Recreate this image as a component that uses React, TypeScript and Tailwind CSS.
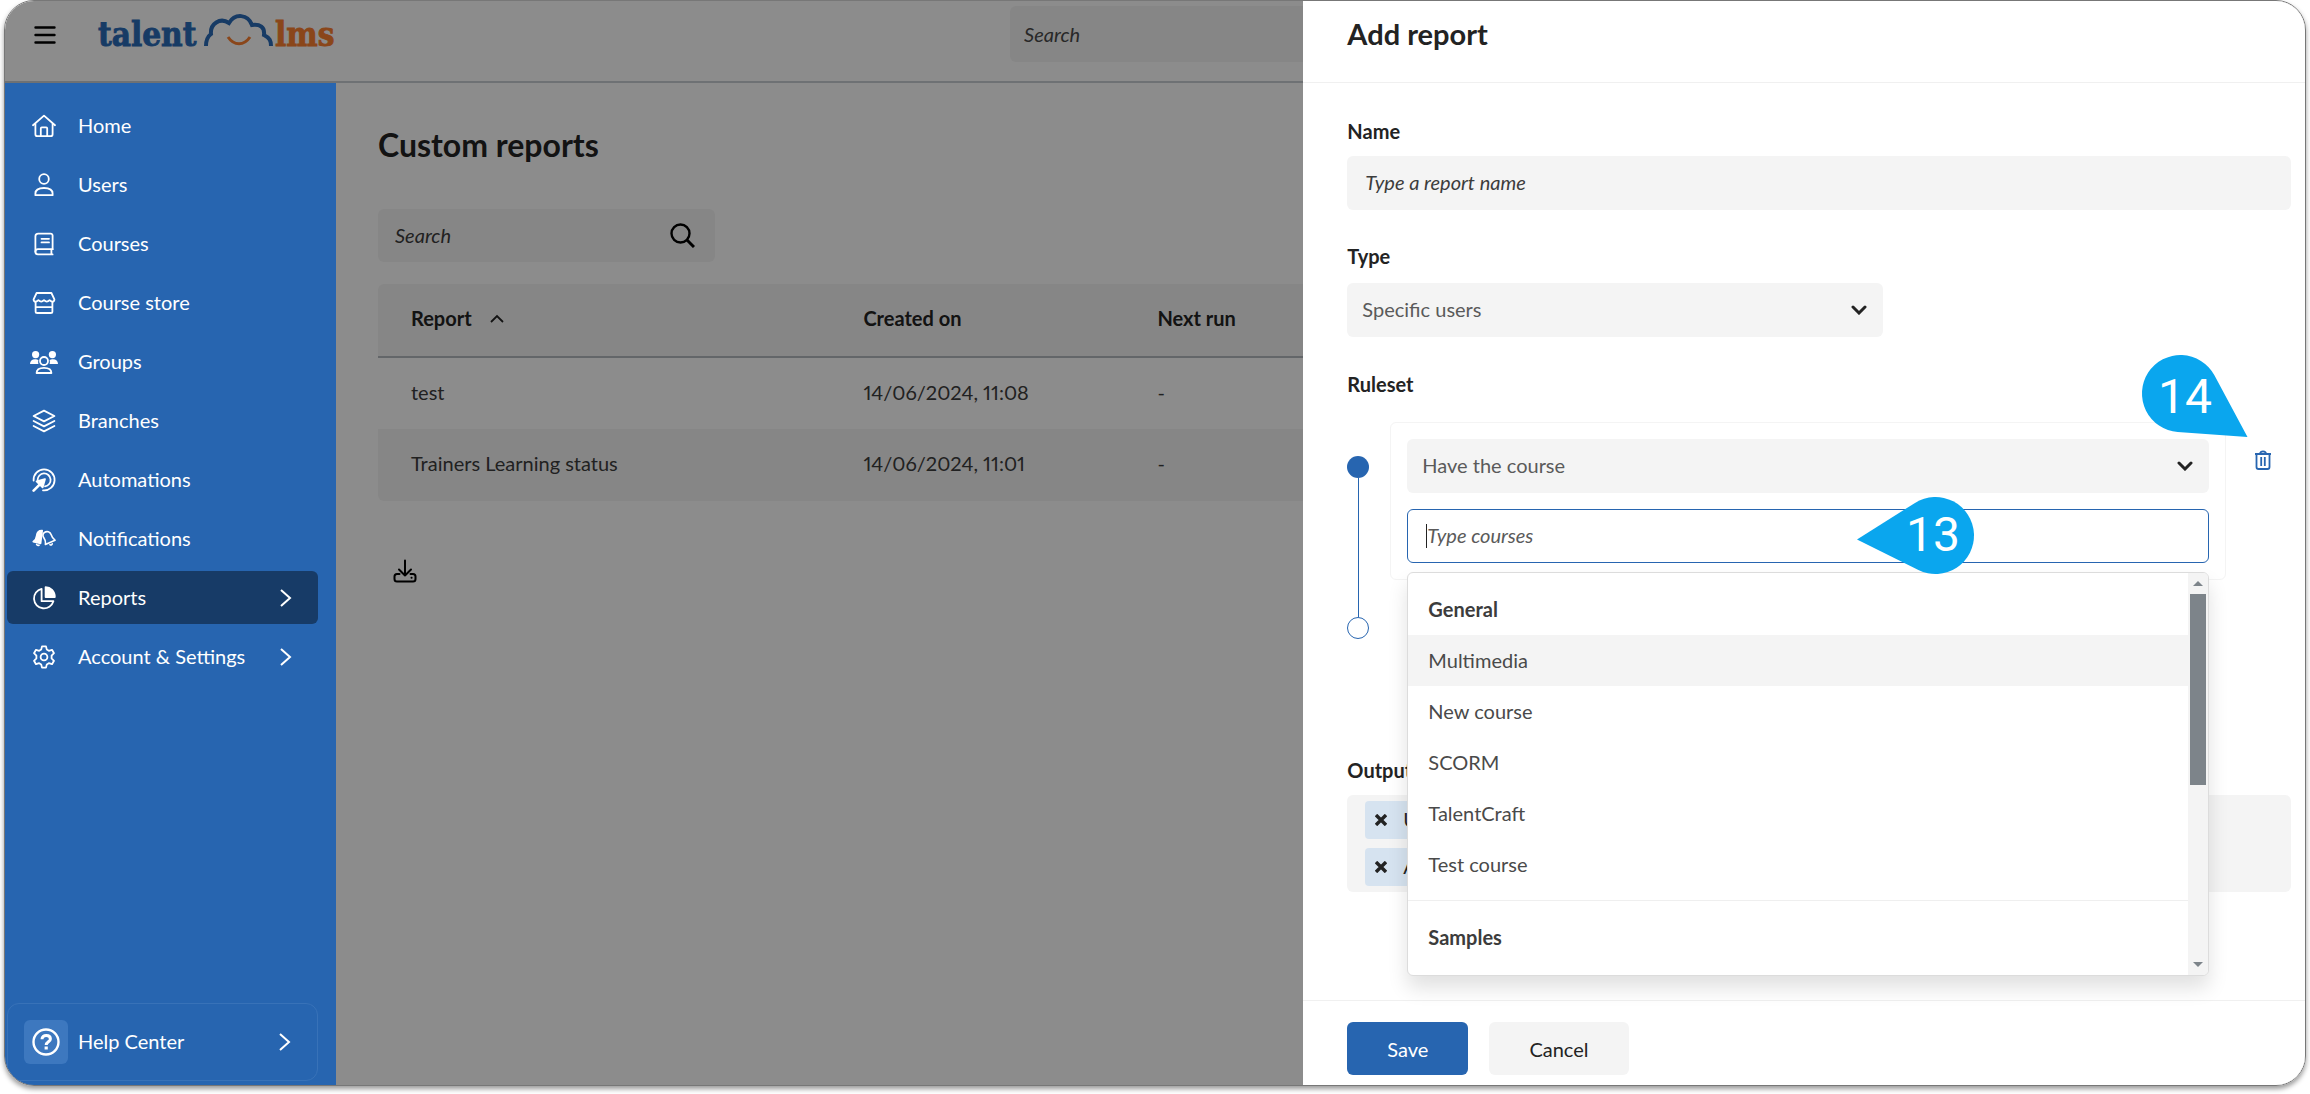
import React, { useState } from 'react';

interface IconProps {
  className?: string;
}

interface NavItem {
  label: string;
  icon: React.FC<IconProps>;
  active?: boolean;
  expandable?: boolean;
}

interface ReportRow {
  name: string;
  createdOn: string;
  nextRun: string;
}

const Svg: React.FC<IconProps & { children: React.ReactNode; width?: number }> = ({ className = 'size-6', children, width = 1.8 }) => (
  <svg viewBox="0 0 24 24" fill="none" stroke="currentColor" strokeWidth={width} strokeLinecap="round" strokeLinejoin="round" className={className} aria-hidden="true">
    {children}
  </svg>
);

const HomeIcon: React.FC<IconProps> = (props) => (
  <Svg {...props}>
    <path d="M1 11.2 12 1.6l11 9.6" />
    <path d="M3.4 10v10.2a2 2 0 0 0 2 2h13.2a2 2 0 0 0 2-2V10" />
    <path d="M8.8 22v-7.6a1 1 0 0 1 1-1h4.4a1 1 0 0 1 1 1V22" />
  </Svg>
);

const UserIcon: React.FC<IconProps> = (props) => (
  <Svg {...props}>
    <circle cx="12" cy="6" r="4.8" />
    <path d="M3.4 22.2v-1.6c0-3.4 3-5.6 8.6-5.6s8.6 2.2 8.6 5.6v1.6Z" />
  </Svg>
);

const BookIcon: React.FC<IconProps> = (props) => (
  <Svg {...props}>
    <path d="M20.6 17.2V3.600a2 2 0 0 0-2-2H6.2a2.8 2.8 0 0 0-2.8 2.8v15.4" />
    <path d="M20.6 17.2H6a2.6 2.6 0 0 0 0 5.2h14.6M19.4 17.2v5.2M9.500 6.8h7.500M9.500 10.4h7.500" />
  </Svg>
);

const StoreIcon: React.FC<IconProps> = (props) => (
  <Svg {...props}>
    <path d="M4.6 2h14.8l3 6.4c0 1.5-1 2.200-2.200 2.200s-2-.8-2.600-1.400c-.6.6-1.400 1.400-2.800 1.400s-2.200-.8-2.800-1.400c-.6.6-1.400 1.400-2.800 1.400S7 9.800 6.400 9.200c-.6.6-1.400 1.400-2.600 1.400S1.600 9.900 1.600 8.400Z" />
    <path d="M3.600 11v9.400a1.600 1.600 0 0 0 1.600 1.600h13.600a1.600 1.600 0 0 0 1.600-1.600V11M3.600 16.200h16.800" />
  </Svg>
);

const GroupsIcon: React.FC<IconProps> = () => (
  <svg viewBox="0 0 28 24" fill="none" stroke="currentColor" strokeWidth="1.8" strokeLinejoin="round" className="h-6 w-7" aria-hidden="true">
    <circle cx="14" cy="11" r="4" />
    <path d="M6.6 23c0-3.4 2.6-5.2 7.4-5.2s7.4 1.8 7.4 5.2Z" />
    <g fill="currentColor" stroke="none">
      <circle cx="5.6" cy="4.6" r="3.6" />
      <circle cx="22.4" cy="4.6" r="3.6" />
      <path d="M0 14c0-3.2 2-4.8 5-4.8 1.4 0 2.600.2 3.400.8-.4 1.200-.4 2.600 0 4ZM28 14c0-3.200-2-4.800-5-4.800-1.400 0-2.600.2-3.400.8.4 1.200.4 2.600 0 4Z" />
    </g>
  </svg>
);

const BranchesIcon: React.FC<IconProps> = (props) => (
  <Svg {...props}>
    <path d="M12 1.6 22.4 7 12 12.4 1.6 7Z" />
    <path d="M1.6 12 12 17.4 22.4 12M1.6 17 12 22.4 22.4 17" />
  </Svg>
);

const AutomationsIcon: React.FC<IconProps> = (props) => (
  <Svg {...props}>
    <path d="M1.6 12.5A10.5 10.5 0 1 1 11 22.4" />
    <path d="M5.6 12A6.5 6.5 0 1 1 13 18.4" />
    <path d="m1.6 22.6 7-7" strokeWidth="2.6" />
    <path d="M13 11 4.6 13.4l6 6Z" fill="currentColor" />
  </Svg>
);

const BellsIcon: React.FC<IconProps> = (props) => (
  <Svg {...props} width={1.6}>
    <path d="M10.2 3.6C6.6 3.4 5 5.6 4.6 8.8c-.2 2.6-1.4 4.4-3.400 5.800l7.400 1.800Z" fill="currentColor" />
    <path d="M12.2 5.600c2.800-2 6-.8 7 2.200.8 2.600 1.600 4 3.800 5.400l-9.600 4.200c.4-3-.2-4.600-1.600-6.600-1.200-2-1-4 .4-5.200Z" />
    <path d="M4.600 17.400c.4.8 1.400 1.200 2.400.8M18 17.600c.8.8 2 .4 2.200-.8" />
  </Svg>
);

const PieIcon: React.FC<IconProps> = (props) => (
  <Svg {...props}>
    <path d="M9.6 2.8a9.9 9.9 0 1 0 11.8 12.4H9.600Z" />
    <path d="M13.6 1.2c5 0 9.200 4 9.200 9.800h-9.200Z" fill="currentColor" />
  </Svg>
);

const GearIcon: React.FC<IconProps> = (props) => (
  <Svg {...props}>
    <circle cx="12" cy="12" r="3.4" />
    <path d="M10 1.400h4l.8 3.200 2 1.200 3.200-1 2 3.400-2.400 2.400v2.800l2.400 2.400-2 3.400-3.200-1-2 1.200-.8 3.200h-4l-.8-3.200-2-1.200-3.200 1-2-3.400 2.400-2.400v-2.800L2 8.200l2-3.400 3.200 1 2-1.200Z" />
  </Svg>
);

const ChevronRight: React.FC<IconProps> = ({ className }) => (
  <svg viewBox="0 0 12 18" fill="none" stroke="currentColor" strokeWidth="2" className={className} aria-hidden="true">
    <path d="m1 1 9 8-9 8" />
  </svg>
);

const ChevronDown: React.FC<IconProps> = ({ className }) => (
  <svg viewBox="0 0 16 10" fill="none" stroke="currentColor" strokeWidth="3" strokeLinecap="round" className={className} aria-hidden="true">
    <path d="m2 2 6 6 6-6" />
  </svg>
);

const NAV_ITEMS: NavItem[] = [
  { label: 'Home', icon: HomeIcon },
  { label: 'Users', icon: UserIcon },
  { label: 'Courses', icon: BookIcon },
  { label: 'Course store', icon: StoreIcon },
  { label: 'Groups', icon: GroupsIcon },
  { label: 'Branches', icon: BranchesIcon },
  { label: 'Automations', icon: AutomationsIcon },
  { label: 'Notifications', icon: BellsIcon },
  { label: 'Reports', icon: PieIcon, active: true, expandable: true },
  { label: 'Account & Settings', icon: GearIcon, expandable: true },
];

const REPORTS: ReportRow[] = [
  { name: 'test', createdOn: '14/06/2024, 11:08', nextRun: '-' },
  { name: 'Trainers Learning status', createdOn: '14/06/2024, 11:01', nextRun: '-' },
];

const COURSES = ['Multimedia', 'New course', 'SCORM', 'TalentCraft', 'Test course'];

const OUTPUT_FIELDS = ['User', 'Assigned courses'];

const Logo = () => (
  <svg viewBox="0 0 252 44" className="h-11 w-[252px]" role="img" aria-label="talentlms">
    <g fontSize="33" fontWeight="700" fontFamily="'DejaVu Serif Condensed', 'DejaVu Serif', serif" strokeWidth="0.8">
      <text x="4" y="33" fill="#2b6cb8" stroke="#2b6cb8">talent</text>
      <text x="181" y="33" fill="#fb8030" stroke="#fb8030">lms</text>
    </g>
    <path d="M112 33c0-6 1-9 5-12-1-10 9-17 18-11 6-10 19-9 23 2 8-1 13 2 12 10 6 3 7 6 7 11" fill="none" stroke="#2b6cb8" strokeWidth="4" />
    <path d="M134 24c6 9 16 9 22 0" fill="none" stroke="#fb8030" strokeWidth="3" />
  </svg>
);

const Header = () => (
  <header className="flex h-[82px] shrink-0 items-start border-b-2 border-[#c9ced3] bg-white">
    <div className="flex w-[43.7%] items-start gap-[38px] pt-3 pl-[29px]">
      <button type="button" aria-label="Menu" className="mt-3 text-black">
        <svg viewBox="0 0 22 20" fill="none" stroke="currentColor" strokeWidth="2.4" strokeLinecap="round" className="h-5 w-[22px]">
          <path d="M1.5 2.5h19M1.5 10h19M1.5 17.5h19" />
        </svg>
      </button>
      <Logo />
    </div>
    <input
      type="search"
      aria-label="Search portal"
      placeholder="Search"
      className="mt-[5px] mr-48 h-14 flex-1 rounded-md bg-[#f4f4f4] px-3.5 italic placeholder-[#4a4a4a]"
    />
  </header>
);

const Sidebar = () => (
  <nav className="relative z-20 flex w-[331px] shrink-0 flex-col bg-[#2765b0] pt-4 pr-[18px] pb-1 pl-0.5 text-white">
    <ul className="flex flex-1 flex-col gap-1.5">
      {NAV_ITEMS.map(({ label, icon: Icon, active, expandable }) => (
        <li key={label}>
          <a href="#" className={`flex h-[53px] items-center rounded-md pr-[26px] pl-[23px] ${active ? 'bg-[#173b67]' : ''}`}>
            <span className="flex w-7 justify-center">
              <Icon className="size-6" />
            </span>
            <span className="ml-5 flex-1 pb-0.5">{label}</span>
            {expandable && <ChevronRight className="h-[18px] w-3" />}
          </a>
        </li>
      ))}
    </ul>
    <button type="button" className="flex h-[78px] items-center rounded-xl border border-[#3872b8] pr-[26px] pl-4 text-left">
      <span className="flex size-11 items-center justify-center rounded-md bg-[#3d78bf]">
        <svg viewBox="0 0 28 28" fill="none" stroke="currentColor" strokeWidth="2.4" className="size-7" aria-hidden="true">
          <circle cx="14" cy="14" r="12.5" />
          <path d="M10 11.2c0-2.4 1.8-3.6 4.200-3.600 2.600 0 4.200 1.400 4.200 3.400 0 2.800-4.200 2.800-4.200 6" strokeWidth="3" />
          <path d="M14.2 18.600v3" strokeWidth="3.2" />
        </svg>
      </span>
      <span className="ml-2.5 flex-1 pb-0.5">Help Center</span>
      <ChevronRight className="h-[18px] w-3" />
    </button>
  </nav>
);

const ReportsPage = () => (
  <main className="flex-1 bg-white px-[42px] pt-[42px] text-[#3c3c3c]">
    <h1 className="text-[32px] leading-10 font-bold text-[#232323]">Custom reports</h1>

    <div className="mt-11 flex h-[53px] w-[337px] items-center rounded-md bg-[#f4f4f4] pr-5 pl-[17px]">
      <input type="search" aria-label="Search reports" placeholder="Search" className="min-w-0 flex-1 pb-0.5 italic placeholder-[#3c3c3c]" />
      <svg viewBox="0 0 25 25" fill="none" stroke="#000" strokeWidth="2.4" className="size-[25px]" aria-hidden="true">
        <circle cx="10.5" cy="10.5" r="9" />
        <path d="m16.5 16.5 7.5 7.5" strokeWidth="3" />
      </svg>
    </div>

    <table className="mt-[22px] w-full table-fixed text-left">
      <thead>
        <tr className="h-[73px] border-b-2 border-[#b4bac0] bg-[#f4f4f4] text-[#232323]">
          <th scope="col" className="w-[24%] rounded-tl-md pb-1 pl-[33px] font-bold">
            <button type="button" className="flex items-center gap-[18px]">
              Report
              <svg viewBox="0 0 14 9" fill="none" stroke="currentColor" strokeWidth="1.8" className="h-[9px] w-3.5" aria-hidden="true">
                <path d="m1 8 6-6 6 6" />
              </svg>
            </button>
          </th>
          <th scope="col" className="w-[15.6%] pb-1 pl-[33px] font-bold">Created on</th>
          <th scope="col" className="rounded-tr-md pb-1 pl-[33px] font-bold">Next run</th>
        </tr>
      </thead>
      <tbody className="proportional-nums">
        {REPORTS.map((row) => (
          <tr key={row.name} className="h-[72px] even:bg-[#f4f4f4]">
            <td className="rounded-bl-md pb-1 pl-[33px]">{row.name}</td>
            <td className="pb-1 pl-[33px]">{row.createdOn}</td>
            <td className="rounded-br-md pb-1 pl-[33px]">{row.nextRun}</td>
          </tr>
        ))}
      </tbody>
    </table>

    <button type="button" aria-label="Download" className="mt-[58px] ml-[15px] text-black">
      <Svg width={2}>
        <path d="M12 1.5v15M6 10.5l6 6 6-6" />
        <path d="M6.5 15H4a2.5 2.5 0 0 0-2.5 2.500v2.500A2.500 2.500 0 0 0 4 22.500h16a2.500 2.500 0 0 0 2.500-2.500v-2.500A2.500 2.500 0 0 0 20 15h-2.500M18.500 18.800h.1" />
      </Svg>
    </button>
  </main>
);

const Select: React.FC<{ id: string; label?: string; value: string; className: string }> = ({ id, label, value, className }) => (
  <div className={`grid items-center ${className}`}>
    <select
      id={id}
      aria-label={label}
      className="col-start-1 row-start-1 h-[54px] w-full appearance-none rounded-md bg-[#f4f4f4] px-[15px] pb-0.5 text-[#5a5a5a]"
    >
      <option>{value}</option>
    </select>
    <ChevronDown className="pointer-events-none col-start-1 row-start-1 mr-4 h-2.5 w-4 justify-self-end text-[#232323]" />
  </div>
);

const Callout: React.FC<{ label: string; className: string; shape: string; textX: number; textY: number }> = ({ label, className, shape, textX, textY }) => (
  <svg className={`z-20 overflow-visible ${className}`} aria-hidden="true">
    <path d={shape} fill="#0aa6ee" />
    <text x={textX} y={textY} textAnchor="middle" fill="#fff" fontSize="48" fontFamily="Roboto, sans-serif">{label}</text>
  </svg>
);

const CourseMenu = () => (
  <div className="absolute inset-x-0 top-full z-10 mt-[9px] flex overflow-hidden rounded-md border border-[#dcdcdc] bg-white text-[#4a4a4a] shadow-[0_12px_20px_rgba(0,0,0,0.12)]">
    <div className="flex-1 pt-[11px]">
      <div className="flex h-[51px] items-center px-5 pb-0.5 font-bold text-[#3c3c3c]">General</div>
      <ul role="listbox" aria-label="General">
        {COURSES.map((course, i) => (
          <li key={course} role="option" aria-selected={i === 0} className={`flex h-[51px] items-center px-5 pb-0.5 ${i === 0 ? 'bg-[#f4f4f4]' : ''}`}>
            {course}
          </li>
        ))}
      </ul>
      <div className="mt-2.5 flex h-[75px] items-center border-t border-[#efefef] px-5 pb-0.5 font-bold text-[#3c3c3c]">Samples</div>
    </div>
    {/* Scrollbar */}
    <div className="flex w-5 flex-col items-center bg-[#f4f4f4] text-[#7d848a]">
      <svg viewBox="0 0 10 5" fill="currentColor" className="my-2 h-[5px] w-2.5"><path d="M0 5 5 0l5 5Z" /></svg>
      <div className="h-[191px] w-4 bg-current" />
      <svg viewBox="0 0 10 5" fill="currentColor" className="mt-auto mb-2 h-[5px] w-2.5"><path d="M0 0h10L5 5Z" /></svg>
    </div>
  </div>
);

const Ruleset = () => (
  <div className="mt-[25px] flex h-[220px] items-start">
    <div className="flex flex-col items-center pt-[34px]">
      <span className="size-[22px] rounded-full bg-[#2765b0]" />
      <span className="h-[139px] w-px bg-[#2765b0]" />
      <span className="size-[22px] rounded-full border border-[#2765b0]" />
    </div>
    <div className="ml-[21px] flex-1 rounded-md border border-[#f4f4f4] p-4">
      <Select id="rule-type" label="Rule" value="Have the course" className="w-full" />
      <div className="relative mt-4">
        <div className="flex h-[54px] items-center rounded-md border border-[#2765b0] px-[18px]">
          <span className="h-6 w-px bg-[#232323]" />
          <input type="text" aria-label="Courses" placeholder="Type courses" className="min-w-0 flex-1 pb-0.5 italic outline-none placeholder-[#5a5a5a]" />
        </div>
        <CourseMenu />
        <Callout
          label="13"
          className="absolute -top-3 left-[450px] h-[77px] w-[118px]"
          shape="M0 42.5 58 5.9A38.5 38.5 0 1 1 61.4 73Z"
          textX={76}
          textY={54}
        />
      </div>
    </div>
    <button type="button" aria-label="Delete rule" className="relative mt-7 mr-[19px] ml-7 text-[#2765b0]">
      <svg viewBox="0 0 18 20" fill="none" stroke="currentColor" strokeWidth="1.8" className="h-5 w-[18px]" aria-hidden="true">
        <path d="M1 4h16M6 4c0-3.5 6-3.5 6 0M2.5 4v13a2 2 0 0 0 2 2h9a2 2 0 0 0 2-2V4M7.2 7v9M10.8 7v9" />
      </svg>
      <Callout
        label="14"
        className="absolute right-6 bottom-[33px] h-[82px] w-[106px]"
        shape="M105.5 82 35.7 76.9A38.5 38.5 0 1 1 72.4 20.3Z"
        textX={43}
        textY={58}
      />
    </button>
  </div>
);

const AddReportPanel = () => {
  const [name, setName] = useState('');

  return (
    <div className="absolute inset-0 z-10 flex justify-end bg-black/45">
      <section role="dialog" aria-label="Add report" className="relative z-30 flex w-[43.55%] flex-col bg-white text-[#232323]">
        <header className="flex h-[82px] shrink-0 items-start border-b border-[#f0f0f0] px-11 pt-[15px]">
          <h2 className="text-[29px] leading-9 font-bold">Add report</h2>
        </header>

        <form id="add-report" onSubmit={(e) => e.preventDefault()} className="flex flex-1 flex-col pt-[35px] pr-3.5 pl-11">
          <label htmlFor="report-name" className="font-bold">Name</label>
          <input
            id="report-name"
            type="text"
            value={name}
            onChange={(e) => setName(e.target.value)}
            placeholder="Type a report name"
            className="mt-3 h-[54px] rounded-md bg-[#f4f4f4] px-[18px] pb-0.5 italic placeholder-[#3c3c3c]"
          />

          <label htmlFor="report-type" className="mt-[33px] font-bold">Type</label>
          <Select id="report-type" value="Specific users" className="mt-3.5 w-[56.8%]" />

          <h3 className="mt-[34px] font-bold">Ruleset</h3>
          <Ruleset />

          <h3 className="mt-[115px] font-bold">Output</h3>
          <ul className="mt-3 flex h-[97px] flex-col items-start justify-between rounded-md bg-[#f4f4f4] px-[18px] py-1.5">
            {OUTPUT_FIELDS.map((field) => (
              <li key={field} className="flex h-[38px] items-center rounded-sm bg-[#d6e3f0] pr-4">
                <button type="button" aria-label={`Remove ${field}`} className="px-2.5">
                  <svg viewBox="0 0 12 12" fill="none" stroke="currentColor" strokeWidth="3.4" className="size-3"><path d="m1 1 10 10M11 1 1 11" /></svg>
                </button>
                <span className="pb-0.5 pl-1.5">{field}</span>
              </li>
            ))}
          </ul>
        </form>

        <footer className="flex h-[85px] shrink-0 items-start gap-[21px] border-t border-[#f0f0f0] pt-[21px] pl-11">
          <button type="submit" form="add-report" className="h-[53px] rounded-md bg-[#2765b0] px-10 text-white">Save</button>
          <button type="button" className="h-[53px] rounded-md bg-[#f4f4f4] px-10">Cancel</button>
        </footer>
      </section>
    </div>
  );
};

export default function App() {
  return (
    <div className="h-screen bg-white px-1 pb-2 font-[Lato,sans-serif] text-xl leading-[26px]">
      <div className="relative flex h-full flex-col overflow-hidden rounded-[30px] border border-[#777] shadow-[0_3px_5px_rgba(0,0,0,0.4)]">
        <Header />
        <div className="flex min-h-0 flex-1">
          <Sidebar />
          <ReportsPage />
        </div>
        <AddReportPanel />
      </div>
    </div>
  );
}
